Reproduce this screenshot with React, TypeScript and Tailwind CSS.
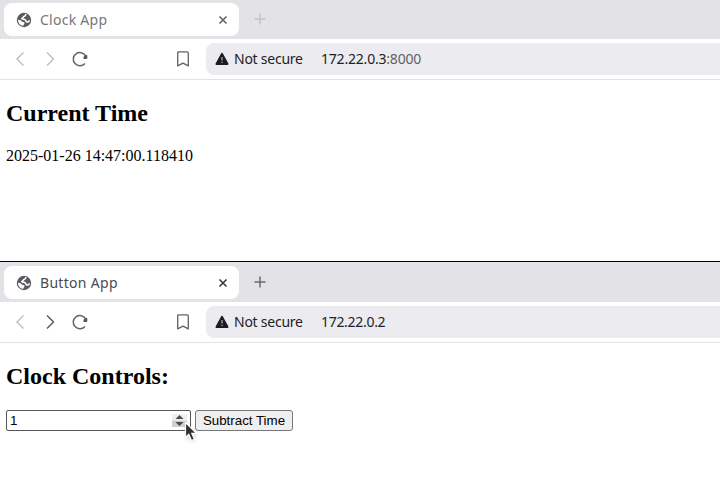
import type { ReactNode } from 'react';

function Globe() {
  return (
    <svg className="h-4 w-4 shrink-0" viewBox="0 0 16 16">
      <circle cx="8" cy="8" r="7.200" fill="#5a5b5f" />
      <path d="M9.800 2.500C9.600 4.200 8.600 4.300 7.600 4.700C7.400 5.900 6.600 6.100 5.800 6.500C6.200 7.700 8.200 7 9.300 7.900C10.300 8.900 9.800 9.900 11 10.100C12.200 10.200 13 9.600 13.200 8.800" fill="none" stroke="#fff" strokeWidth="1.500" strokeLinecap="round" />
      <path d="M2 7.700C4.200 7.700 5.200 8.400 5.800 9.600C6.400 10.300 8 9.900 8.500 10.700C8.900 11.700 7.700 12.200 7.300 13.800C4.300 13.600 1.900 11 2 7.700z" fill="#fff" />
    </svg>
  );
}

function Chevron({ right = false, active = false }: { right?: boolean; active?: boolean }) {
  return (
    <svg className="h-4 w-4 shrink-0" viewBox="0 0 16 16" fill="none" stroke={active ? '#55565a' : '#bdbdc1'} strokeWidth="1.4">
      <path d={right ? 'M5 1.500 11.500 8 5 14.500' : 'M11.500 1.500 5 8l6.500 6.500'} />
    </svg>
  );
}

function Reload() {
  return (
    <svg className="h-4 w-4 shrink-0" viewBox="0 0 16 16">
      <path d="M12.900 12.400A6.600 6.600 0 1 1 13.600 4.800" fill="none" stroke="#626367" strokeWidth="1.500" />
      <path d="M14.800 4.300V7.500H11.900L12.200 5.500 13.300 4.700z" fill="#55565a" stroke="#55565a" strokeWidth="1" strokeLinejoin="round" />
    </svg>
  );
}

function Bookmark() {
  return (
    <svg className="h-4 w-4 shrink-0" viewBox="0 0 16 16" fill="none" stroke="#626367" strokeWidth="1.300">
      <path d="M2.700 1.900Q2.700.8 3.800.8h8.400q1.100 0 1.100 1.100v13L8 12.200l-5.300 2.700z" strokeLinejoin="round" />
    </svg>
  );
}

function Warning() {
  return (
    <svg className="h-[14px] w-[14px] shrink-0" viewBox="0 0 14 14">
      <path d="M7 1.800 12.600 12H1.400z" fill="#1b1c20" stroke="#1b1c20" strokeWidth="1.800" strokeLinejoin="round" />
      <path d="M7 5v3.500M7 9.800v1.300" stroke="#b5b4ba" strokeWidth="1.200" />
    </svg>
  );
}

interface BrowserProps {
  title: string;
  address: string;
  port?: string;
  active?: boolean;
  children: ReactNode;
}

function Browser({ title, address, port, active = false, children }: BrowserProps) {
  return (
    <section className={active ? 'h-[233px] border-t border-black bg-white' : 'h-[261px] bg-white'}>
      <div className={`flex items-start bg-[#e3e2e7] pl-1 ${active ? 'h-10 pt-1' : 'h-[39px] pt-[3px]'}`}>
        <div className="flex h-[33px] w-[235px] items-center rounded-lg bg-white pr-[11px] pl-3">
          <Globe />
          <span
            className={`ml-2 flex-1 font-['Noto_Sans',sans-serif] text-[14px] leading-5 ${
              active ? 'tracking-[0.3px] text-[#4b4b4f]' : 'tracking-[0.26px] text-[#77777a]'
            }`}
          >
            {title}
          </span>
          <svg className="h-[10px] w-[10px]" viewBox="0 0 10 10" stroke={active ? '#38393d' : '#626266'} strokeWidth="1.600">
            <path d="m1.500 1.500 7 7m0-7-7 7" />
          </svg>
        </div>
        <svg className="mt-[10px] ml-[15px] h-3 w-3" viewBox="0 0 12 12" stroke={active ? '#6c6c70' : '#c4c4c8'} strokeWidth="1.500">
          <path d="M6 .5v11M.5 6h11" />
        </svg>
      </div>
      <div className="flex h-[41px] items-center border-b border-[#e2e2e5] pl-3">
        <Chevron />
        <div className="ml-[14px] flex"><Chevron right active={active} /></div>
        <div className="ml-[14px] flex"><Reload /></div>
        <div className="ml-[87px] flex"><Bookmark /></div>
        <div className="ml-[15px] flex h-8 flex-1 items-center rounded-l-lg bg-[#ecebf0] pl-[9px] font-['Noto_Sans',sans-serif] text-[14px] leading-5 text-[#222226]">
          <Warning />
          <span className="ml-[5px] w-[87px] tracking-[-0.25px]">Not secure</span>
          <span className={port ? 'tracking-[-0.2px]' : 'tracking-[-0.3px]'}>
            {address}
            {port && <span className="text-[#626267]">{port}</span>}
          </span>
        </div>
      </div>
      <main className="px-1.5 pt-5 font-['Liberation_Serif',serif] text-black">{children}</main>
    </section>
  );
}

function Spinner() {
  return (
    <svg className="h-[13px] w-[15px]" viewBox="0 0 15 13">
      <path d="M0 0h15v6.500H0z" fill="#efefef" />
      <path d="M0 6.500h15V13H0z" fill="#cfcfcf" />
      <path d="m7.500 1 4 4h-8zM7.500 12l4-4h-8z" fill="#4b4b4b" />
    </svg>
  );
}

export default function App() {
  return (
    <div className="relative h-[494px] w-[720px] overflow-hidden bg-white">
      <Browser title="Clock App" address="172.22.0.3" port=":8000">
        <h2 className="text-2xl leading-[27px] font-bold">Current Time</h2>
        <p className="mt-5 text-base leading-[18px]">2025-01-26 14:47:00.118410</p>
      </Browser>
      <Browser title="Button App" address="172.22.0.2" active>
        <h2 className="text-2xl leading-[27px] font-bold">Clock Controls:</h2>
        <div className="mt-5 flex gap-1 font-['Liberation_Sans',sans-serif] text-[13.333px]">
          <div className="flex h-[21px] w-[185px] items-center justify-between rounded-[2px] border border-[#55555a] pr-[3px] pl-[3px]">
            <span>1</span>
            <Spinner />
          </div>
          <button className="flex h-[21px] w-[98px] items-center justify-center rounded-[3px] border border-[#77777b] bg-[#efefef] whitespace-nowrap">
            Subtract Time
          </button>
        </div>
      </Browser>
      <svg className="absolute top-[421px] left-[184px] h-[22px] w-[14px]" viewBox="0 0 14 22">
        <path d="M1.500 1.500v15l3.300-3.100 2.600 6.100 3-1.300-2.600-5.900h4.700z" fill="#303034" stroke="#fff" strokeWidth="1.200" className="drop-shadow-sm" />
      </svg>
    </div>
  );
}
